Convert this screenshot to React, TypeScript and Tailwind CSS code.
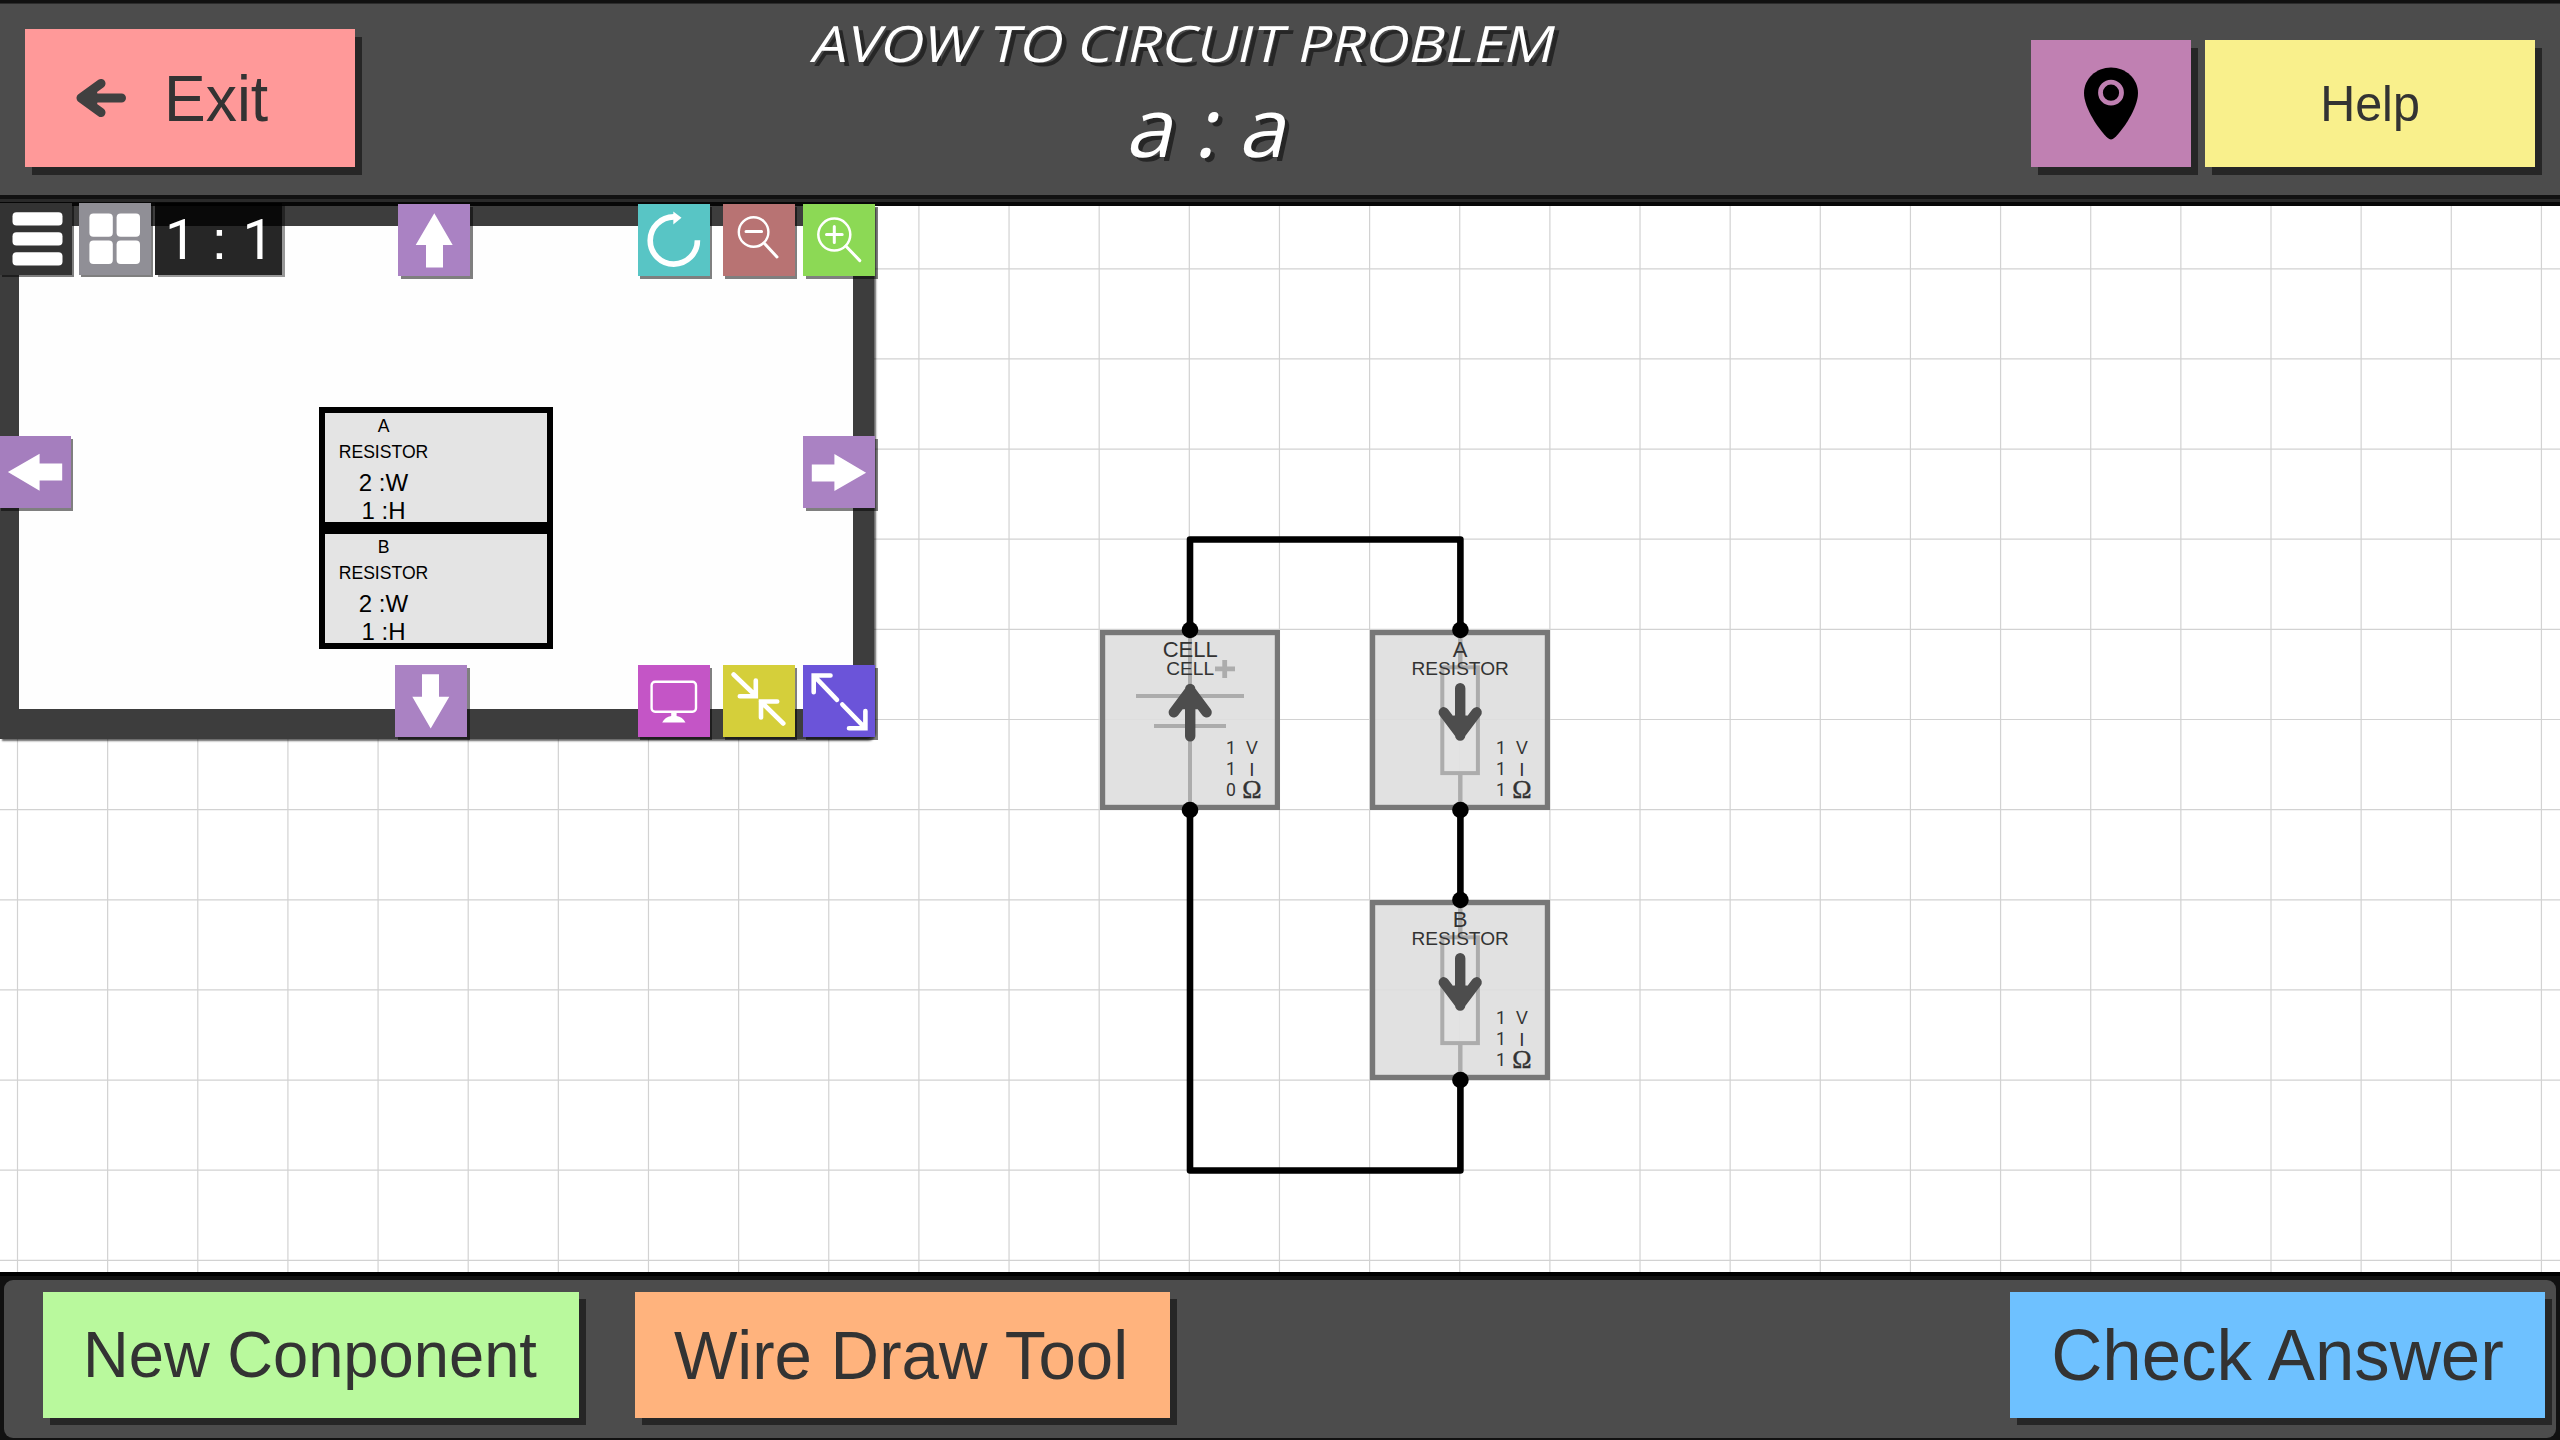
import type { ReactNode } from "react";

const SANS = "font-['Liberation_Sans',Arial,sans-serif]";

/* ---------- Toolbar of the floating diagram window ---------- */

function Tool({ place, children }: { place: string; children?: ReactNode }) {
  return (
    <button className={`absolute h-[72px] w-[72px] ${place}`}>
      <svg viewBox="0 0 72 72" className="block h-full w-full" fill="none" stroke="white" strokeLinecap="round">
        {children}
      </svg>
    </button>
  );
}

function BlockArrow({ turn }: { turn: number }) {
  return (
    <path
      d="M36.3 9.3 L54.7 41 H45 V63.6 H28 V41 H17.7 Z"
      fill="white"
      stroke="none"
      transform={`rotate(${turn} 36 36.4)`}
    />
  );
}

function AvowBox({ name, wide, high }: { name: string; wide: number; high: number }) {
  return (
    <div className="h-[121px] w-[234px] border-[6px] border-black bg-[#e4e4e4] text-black">
      <div className="flex w-[117px] flex-col items-center whitespace-pre">
        <span className="text-[17.6px] leading-[26px]">{name}</span>
        <span className="text-[17.6px] leading-[26px]">RESISTOR</span>
        <span className="text-[24px] leading-[35px]">{wide} :W</span>
        <span className="text-[24px] leading-[22px]">{high} :H</span>
      </div>
    </div>
  );
}

function DiagramWindow() {
  return (
    <section className="absolute left-0 top-0 h-[533px] w-[874px] rounded-br-[8px] border-b-[30px] border-l-[19px] border-r-[21px] border-t-[20px] border-[#3d3d3d] bg-[#fefefe] shadow-[2px_2px_2px_rgba(0,0,0,0.6)]">
      <div className="flex flex-col pl-[300px] pt-[181px]">
        <AvowBox name="A" wide={2} high={1} />
        <AvowBox name="B" wide={2} high={1} />
      </div>
    </section>
  );
}

function DiagramTools() {
  return (
    <div className="absolute left-0 top-[-3px] h-0 w-0">
      <Tool place="left-0 top-0 bg-[#333333] shadow-[2px_2px_0_rgba(0,0,0,0.5)]">
        {[9.3, 29.2, 49.2].map((y) => (
          <rect key={y} x="12.5" y={y} width="50" height="13.2" rx="4" fill="white" stroke="none" />
        ))}
      </Tool>
      <Tool place="left-[79px] top-0 bg-[#908f96] shadow-[2px_2px_0_rgba(0,0,0,0.5)]">
        {[10.4, 37.6].map((x) =>
          [10.4, 37.6].map((y) => (
            <rect key={`${x}-${y}`} x={x} y={y} width="23.4" height="23.4" rx="4" fill="white" stroke="none" />
          ))
        )}
      </Tool>
      <div className="absolute left-[155px] top-0 h-[72px] w-[127px]">
        <div className="absolute inset-y-0 left-0 w-full bg-black/85" />
        <div className="absolute left-[3px] top-full h-[2px] w-full bg-black/40" />
        <div className="absolute left-full top-[2px] h-[70px] w-[3px] bg-black/40" />
        <div className="relative flex h-full items-center justify-center whitespace-pre pl-[2px] pt-[2px] font-[Roboto,sans-serif] text-[56px] leading-none text-white">
          <span>1</span>
          <span className="font-['Liberation_Sans',sans-serif] text-[55px]"> : </span>
          <span>1</span>
        </div>
      </div>
      <Tool place="left-[398px] top-px bg-[#aa82c3] shadow-[3px_3px_0_rgba(0,0,0,0.5)]">
        <BlockArrow turn={0} />
      </Tool>
      <Tool place="left-[-1px] top-[233px] bg-[#a57ebe] shadow-[2px_3px_0_rgba(0,0,0,0.5)]">
        <BlockArrow turn={-90} />
      </Tool>
      <Tool place="left-[803px] top-[233px] bg-[#aa82c3] shadow-[3px_3px_0_rgba(0,0,0,0.5)]">
        <BlockArrow turn={90} />
      </Tool>
      <Tool place="left-[395px] top-[462px] bg-[#aa82c3] shadow-[3px_3px_0_rgba(0,0,0,0.5)]">
        <BlockArrow turn={180} />
      </Tool>
      <Tool place="left-[638px] top-px bg-[#58c5c5] shadow-[2px_3px_0_rgba(0,0,0,0.5)]">
        <path d="M59.4 36.3 A23.6 23.6 0 1 1 36 12.9" strokeWidth="5.6" strokeLinecap="butt" />
        <path d="M35.3 7.4 L43.5 13.8 L35.3 20.4 Z" fill="white" stroke="none" />
      </Tool>
      <Tool place="left-[723px] top-px bg-[#b87373] shadow-[2px_3px_0_rgba(0,0,0,0.5)]">
        <circle cx="30.6" cy="28" r="14.8" strokeWidth="2.4" />
        <path d="M23 27.6 H38.6 M41.5 39.5 L54 53" strokeWidth="3" />
      </Tool>
      <Tool place="left-[803px] top-px bg-[#8cd955] shadow-[3px_3px_0_rgba(0,0,0,0.5)]">
        <circle cx="31.3" cy="30.6" r="16" strokeWidth="2.5" />
        <path d="M23.5 30.6 H39.2 M31.3 22.6 V38.6 M43 42.2 L56.8 56.6" strokeWidth="3" />
      </Tool>
      <Tool place="left-[638px] top-[462px] bg-[#c455c6] shadow-[2px_3px_0_rgba(0,0,0,0.5)]">
        <rect x="13.6" y="16.8" width="44.4" height="30" rx="3.5" strokeWidth="2.4" />
        <path d="M33.2 47 H38.6 V51 Q44.5 52 47.5 57.4 H24.2 Q27.2 52 33.2 51 Z" fill="white" stroke="none" />
      </Tool>
      <Tool place="left-[723px] top-[462px] bg-[#d5cf3a] shadow-[2px_3px_0_rgba(0,0,0,0.5)]">
        <path
          d="M10.6 9.5 L32.5 30.5 M32.8 15.5 V31.2 H16.8 M60.3 58.5 L38 36.7 M54.2 36.5 H38 V52.5"
          strokeWidth="4.6"
        />
      </Tool>
      <Tool place="left-[803px] top-[462px] bg-[#6b54d9] shadow-[3px_3px_0_rgba(0,0,0,0.5)]">
        <path
          d="M34 34.8 L11 10.8 M27.5 10.5 H10.7 V27.2 M39.3 39.5 L62 62.8 M62.4 46 V63.2 H46"
          strokeWidth="4.6"
        />
      </Tool>
    </div>
  );
}

/* ---------- Circuit canvas (page coordinates, starting below the header) ---------- */

const PITCH = 90.14;
const columns = Array.from({ length: 29 }, (_, i) => 17.5 + PITCH * i);
const rows = Array.from({ length: 12 }, (_, i) => 268.8 + PITCH * i);

function Glyphs({ ohms, label, kind }: { ohms: number; label: string; kind: string }) {
  return (
    <g fill="#333333" textAnchor="middle" className={SANS}>
      <text x="90.2" y="27.4" fontSize="22">{label}</text>
      <text x="90.2" y="44.8" fontSize="19.1">{kind}</text>
      <g fontSize="17.6" className="font-[Roboto,sans-serif]">
        <text x="131" y="124.2">1</text>
        <text x="131" y="145.2">1</text>
        <text x="131" y="166.2">{ohms}</text>
      </g>
      <text x="151.9" y="124" fontSize="17.6">V</text>
      <text x="151.9" y="145.5" fontSize="18.8">I</text>
      <text x="151.9" y="167.8" fontSize="26" stroke="#333333" strokeWidth="0.4" className="font-['Liberation_Serif',serif]">Ω</text>
    </g>
  );
}

function Part({ x, y, children }: { x: number; y: number; children: ReactNode }) {
  return (
    <g transform={`translate(${x} ${y})`}>
      <rect width="180" height="180" fill="#dedede" fillOpacity="0.9" />
      <rect x="2.6" y="2.6" width="174.8" height="174.8" fill="none" stroke="#777777" strokeWidth="5.2" />
      {children}
    </g>
  );
}

function Flow({ down }: { down?: boolean }) {
  return (
    <path
      d="M90.2 59 V106.3 M73.8 82.3 L90.2 60.5 L106.6 82.3 M84 74 L90.2 62 L96.4 74 Z"
      fill="none"
      stroke="#4d4d4d"
      strokeWidth="10.4"
      strokeLinecap="round"
      strokeLinejoin="round"
      transform={down ? "rotate(180 90.2 82.3)" : undefined}
    />
  );
}

function Resistor({ x, y, label }: { x: number; y: number; label: string }) {
  return (
    <Part x={x} y={y}>
      <path d="M90.3 5 V36 M90.3 145 V175" stroke="#acacac" strokeWidth="4.4" />
      <rect x="72.3" y="37.3" width="35.6" height="105.8" fill="#e4e4e4" fillOpacity="0.6" stroke="#acacac" strokeWidth="4" />
      <Flow down />
      <Glyphs label={label} kind="RESISTOR" ohms={1} />
    </Part>
  );
}

function Circuit() {
  return (
    <svg viewBox="0 206 2560 1066" className="block h-[1066px] w-[2560px]">
      <g stroke="#d2d2d2" strokeWidth="1.2">
        {columns.map((x) => (
          <path key={x} d={`M${x} 206 V1272`} />
        ))}
        {rows.map((y) => (
          <path key={y} d={`M0 ${y} H2560`} />
        ))}
      </g>
      <Part x={1100} y={630}>
        <path d="M90 5 V64 M90 98 V175" stroke="#acacac" strokeWidth="4" />
        <path d="M36 66 H144 M54 96 H126" stroke="#acacac" strokeWidth="4" />
        <path d="M115 38.8 H135 M124.7 30 V48" stroke="#acacac" strokeWidth="4.8" />
        <Flow />
        <Glyphs label="CELL" kind="CELL" ohms={0} />
      </Part>
      <Resistor x={1370} y={630} label="A" />
      <Resistor x={1370} y={900} label="B" />
      <g fill="none" stroke="black" strokeWidth="6.6" strokeLinejoin="round">
        <path d="M1190 630 V539.5 H1460.4 V630" />
        <path d="M1460.4 810 V900" />
        <path d="M1460.4 1080 V1170.5 H1190 V810" />
      </g>
      {[
        [1190, 630],
        [1190, 810],
        [1460.4, 630],
        [1460.4, 810],
        [1460.4, 900],
        [1460.4, 1080],
      ].map(([x, y]) => (
        <circle key={`${x}-${y}`} cx={x} cy={y} r="8.3" />
      ))}
    </svg>
  );
}

/* ---------- Page ---------- */

export default function App() {
  return (
    <div className={`flex h-[1440px] w-[2560px] flex-col overflow-hidden bg-white ${SANS} text-[#333333]`}>
      <header className="h-[206px] shrink-0 bg-[#070707]">
        <div className="h-[202px] border-b-[3px] border-[#2a2a2a]">
          <div className="flex h-[199px] items-start border-b-4 border-t-[3px] border-[#111111] bg-[#4c4c4c] shadow-[inset_0_1px_0_#2c2c2c]">
            <button className="ml-[25px] mt-[26px] flex h-[138px] w-[330px] items-center bg-[#ff9999] pl-[51px] shadow-[7px_8px_0_#262626]">
              <svg viewBox="0 0 50 40" className="h-[40px] w-[50px]" fill="none" stroke="#404040" strokeWidth="9" strokeLinecap="round" strokeLinejoin="round">
                <path d="M45.5 20 H6 M25 5.5 L5 20 L25 34.5 M17 16 L8 20 L17 24 Z" />
              </svg>
              <span className="ml-[38px] scale-y-[1.03] text-[62.5px] leading-none">Exit</span>
            </button>
            <div className="flex flex-1 flex-col items-center whitespace-pre font-['Open_Sans',sans-serif] text-white">
              <h1 className="mr-[15px] mt-[10px] -skew-x-12 scale-x-[1.11] text-[50px] font-medium leading-[60px] [text-shadow:5px_4px_0_#262626]">
                AVOW TO CIRCUIT PROBLEM
              </h1>
              <h2 className="ml-[37px] mt-[2px] -skew-x-12 scale-x-[1.03] text-[82px] font-medium leading-[100px] [text-shadow:5px_4px_0_#262626]">
                a : a
              </h2>
            </div>
            <button className="mt-[37px] h-[127px] w-[160px] bg-[#c080b2] shadow-[7px_8px_0_#262626]">
              <svg viewBox="0 0 160 127" className="block h-full w-full">
                <path d="M80 27.5 C95 27.5 107 39 107 53 C107 68 92 90 83.5 97.8 Q80 101 76.5 97.8 C68 90 53 68 53 53 C53 39 65 27.5 80 27.5 Z" fill="black" />
                <circle cx="80" cy="52.7" r="10.5" fill="none" stroke="#c080b2" strokeWidth="4.8" />
              </svg>
            </button>
            <button className="ml-[14px] mr-[25px] mt-[37px] flex h-[127px] w-[330px] items-center justify-center bg-[#f9f08c] text-[48.5px] leading-none shadow-[7px_8px_0_#262626]">
              <span className="scale-y-[1.03]">Help</span>
            </button>
          </div>
        </div>
      </header>

      <main className="relative h-[1066px] shrink-0">
        <Circuit />
        <DiagramWindow />
        <DiagramTools />
      </main>

      <footer className="h-[168px] shrink-0 border-t-4 border-black bg-[#111111] px-1 pb-[2px] pt-1">
        <div className="flex h-[158px] items-start rounded-[9px] bg-[#4c4c4c] pl-[39px] pr-[11px] pt-3">
          <button className="flex h-[126px] w-[536px] items-center justify-center bg-[#b9f99d] pr-[2px] shadow-[7px_7px_0_#262626]">
            <span className="scale-y-[1.03] text-[63.3px] leading-none">New Conponent</span>
          </button>
          <button className="ml-[56px] flex h-[126px] w-[535px] items-center justify-center bg-[#ffb37d] pr-[3px] shadow-[7px_7px_0_#262626]">
            <span className="scale-y-[1.03] text-[67.2px] leading-none">Wire Draw Tool</span>
          </button>
          <button className="ml-auto flex h-[126px] w-[535px] items-center justify-center bg-[#6ec1ff] shadow-[7px_7px_0_#262626]">
            <span className="scale-y-[1.03] text-[70.8px] leading-none">Check Answer</span>
          </button>
        </div>
      </footer>
    </div>
  );
}
